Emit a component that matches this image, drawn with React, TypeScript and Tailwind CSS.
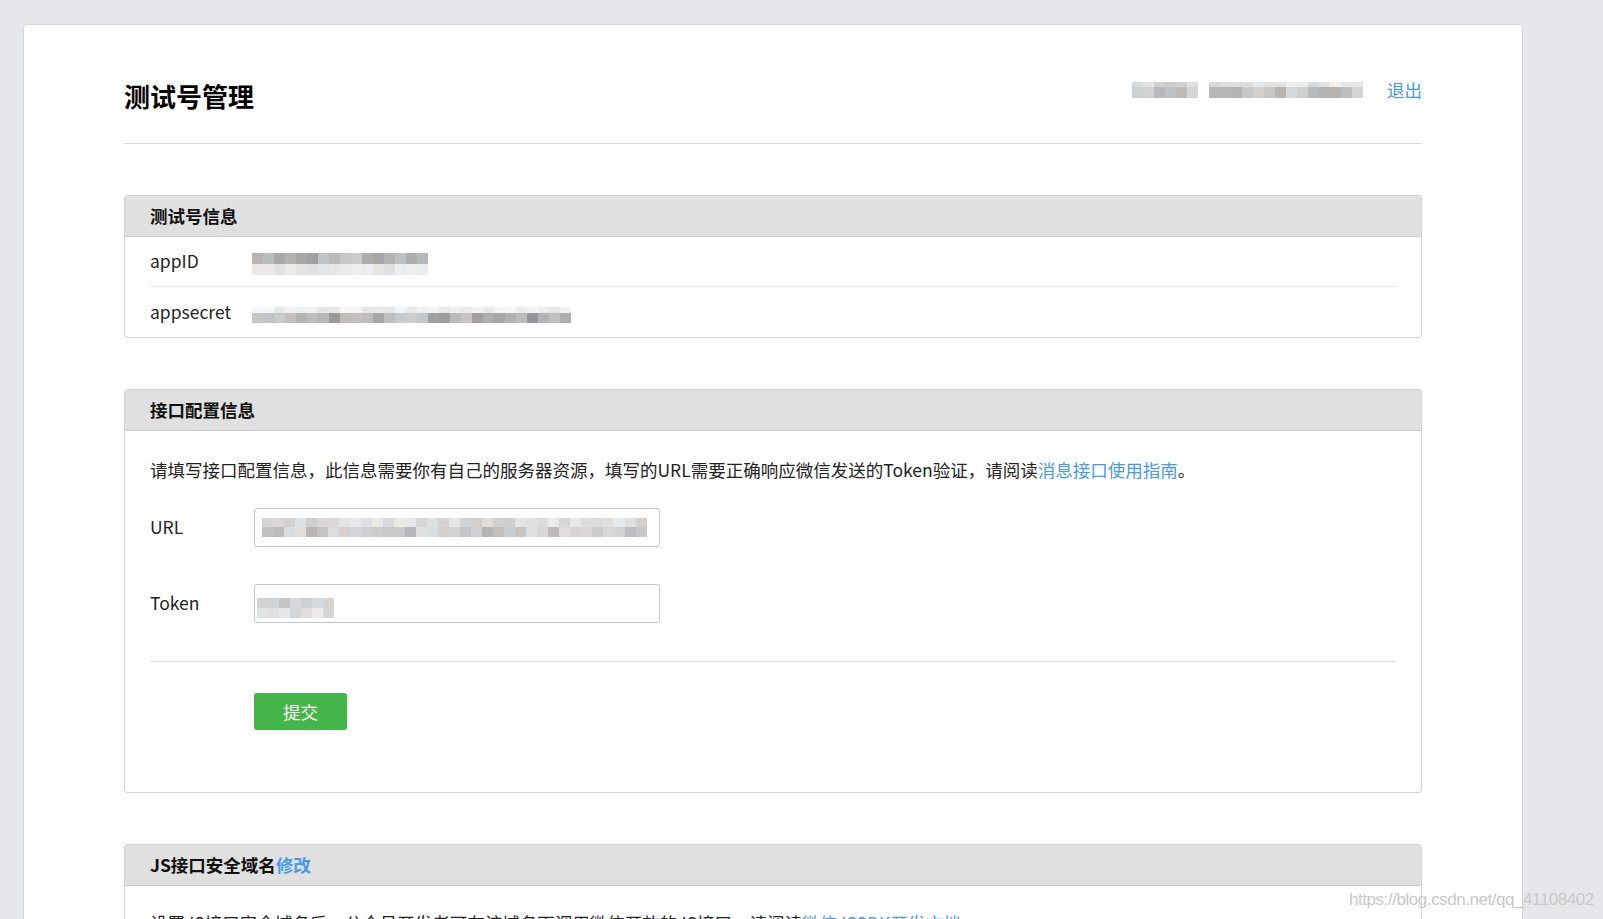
import React from 'react';

// deterministic pseudo-random greys for the redacted (pixelated) values
function greys(seed: number, count: number, min: number, max: number) {
  const out: string[] = [];
  let s = seed;
  for (let i = 0; i < count; i++) {
    s = (s * 9301 + 49297) % 233280;
    const v = Math.round(min + (s / 233280) * (max - min));
    const tint = (s % 7) - 3;
    out.push(`rgb(${v + tint},${v},${v - tint})`);
  }
  return out;
}

function Mosaic({
  rows,
  cell = 11,
}: {
  rows: { seed: number; count: number; min: number; max: number; h: number; offset?: number }[];
  cell?: number;
}) {
  return (
    <div className="flex flex-col">
      {rows.map((r, i) => (
        <div key={i} className="flex" style={{ marginLeft: (r.offset || 0) * cell }}>
          {greys(r.seed, r.count, r.min, r.max).map((c, j) => (
            <div key={j} style={{ width: cell, height: r.h, backgroundColor: c }} />
          ))}
        </div>
      ))}
    </div>
  );
}

function Panel({ title, children }: { title: React.ReactNode; children: React.ReactNode }) {
  return (
    <div className="mt-[51px] border border-[#d4d4d4] rounded-[3px]">
      <div className="h-[41px] bg-[#e0e0e0] border-b border-[#cccccc] px-[25px] flex items-center text-[17.5px] font-bold text-[#111]">
        {title}
      </div>
      {children}
    </div>
  );
}

export default function App() {
  return (
    <div className="min-h-screen bg-[#e6e7eb] pt-[24px] pl-[23px] overflow-hidden h-[919px] relative font-['Noto_Sans_CJK_SC','Liberation_Sans',sans-serif] text-[#353535]">
      <div className="w-[1500px] bg-white border border-[#d5d6d8] rounded-t-[4px] px-[100px] pb-[60px]">
        {/* page header */}
        <div className="flex justify-between pt-[56px] pb-[32px] border-b border-[#d9d9d9]">
          <h1 className="text-[26px] leading-[30px] font-bold text-black">测试号管理</h1>
          <div className="flex items-center h-[18px] gap-[24px]">
            <div className="flex items-end gap-[11px]">
              <Mosaic
                rows={[
                  { seed: 11, count: 6, min: 200, max: 230, h: 5 },
                  { seed: 12, count: 6, min: 180, max: 220, h: 11 },
                ]}
              />
              <Mosaic
                rows={[
                  { seed: 21, count: 14, min: 215, max: 240, h: 5 },
                  { seed: 22, count: 14, min: 178, max: 225, h: 11 },
                ]}
              />
            </div>
            <a className="text-[17.5px] leading-[22px] text-[#459ae9] cursor-pointer">退出</a>
          </div>
        </div>

        {/* test account info */}
        <Panel title="测试号信息">
          <div className="px-[25px] text-[17.5px]">
            <div className="h-[50px] flex items-center border-b border-[#e4e4e4]">
              <div className="w-[102px] text-[#222]">appID</div>
              <div className="pt-[4px]">
                <Mosaic
                  rows={[
                    { seed: 31, count: 16, min: 160, max: 205, h: 11 },
                    { seed: 32, count: 16, min: 225, max: 240, h: 11 },
                  ]}
                />
              </div>
            </div>
            <div className="h-[50px] flex items-center">
              <div className="w-[102px] text-[#222]">appsecret</div>
              <div className="pt-[6px]">
                <Mosaic
                  rows={[
                    { seed: 41, count: 29, min: 228, max: 248, h: 6 },
                    { seed: 42, count: 29, min: 150, max: 205, h: 10 },
                  ]}
                />
              </div>
            </div>
          </div>
        </Panel>

        {/* interface config */}
        <Panel title="接口配置信息">
          <div className="px-[25px] pt-[26px] pb-[62px] text-[17.5px]">
            <p className="leading-[26px] text-[#222]">
              请填写接口配置信息，此信息需要你有自己的服务器资源，填写的URL需要正确响应微信发送的Token验证，请阅读
              <a className="text-[#459ae9] cursor-pointer">消息接口使用指南</a>。
            </p>
            <div className="mt-[25px] flex items-center">
              <label className="w-[104px] text-[#222]">URL</label>
              <div className="w-[406px] h-[39px] border border-[#c6c6c6] rounded-[3px] flex items-center pl-[7px] overflow-visible">
                <Mosaic
                  rows={[
                    { seed: 51, count: 35, min: 205, max: 235, h: 9 },
                    { seed: 52, count: 35, min: 180, max: 225, h: 10 },
                  ]}
                />
              </div>
            </div>
            <div className="mt-[37px] flex items-center">
              <label className="w-[104px] text-[#222]">Token</label>
              <div className="w-[406px] h-[39px] border border-[#c6c6c6] rounded-[3px] flex items-center pl-[2px] pt-[8px]">
                <Mosaic
                  rows={[
                    { seed: 61, count: 7, min: 195, max: 220, h: 10 },
                    { seed: 62, count: 7, min: 210, max: 235, h: 10 },
                  ]}
                />
              </div>
            </div>
            <div className="mt-[38px] border-t border-[#e0e0e0]" />
            <div className="mt-[31px] pl-[104px]">
              <button className="w-[93px] h-[37px] bg-[#44b549] rounded-[3px] text-white text-[17.5px] leading-[37px]">
                提交
              </button>
            </div>
          </div>
        </Panel>

        {/* JS interface domain */}
        <Panel
          title={
            <>
              JS接口安全域名<a className="text-[#459ae9] cursor-pointer">修改</a>
            </>
          }
        >
          <div className="px-[25px] pt-[24px] pb-[30px] text-[17.5px]">
            <p className="leading-[26px] text-[#222]">
              设置JS接口安全域名后，公众号开发者可在该域名下调用微信开放的JS接口，请阅读
              <a className="text-[#459ae9] cursor-pointer">微信JSSDK开发文档</a>。
            </p>
          </div>
        </Panel>
      </div>

      <div className="absolute left-[1349px] top-[889px] text-[17px] leading-[22px] tracking-[-0.45px] text-[#c9c9c9] font-['Liberation_Sans',sans-serif]">
        https://blog.csdn.net/qq_41108402
      </div>
    </div>
  );
}
